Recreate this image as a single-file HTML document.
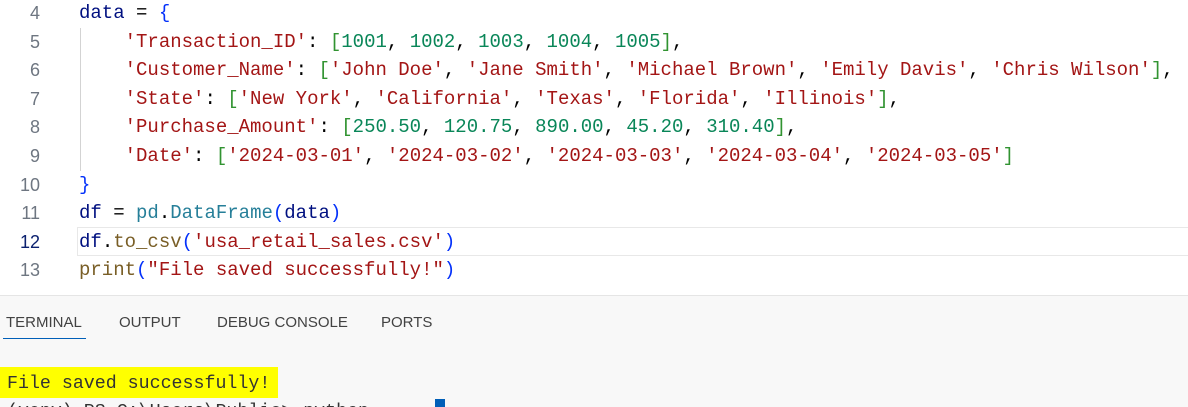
<!DOCTYPE html>
<html style="width:1188px;height:407px;overflow:hidden"><head><style>
body{margin:0;width:1188px;height:407px;overflow:hidden;background:#fff;position:relative;font-family:"Liberation Mono",monospace;}
.code{position:absolute;top:-1px;left:0;width:1188px;}
.l{height:28.6px;line-height:28.6px;font-size:19px;white-space:pre;position:relative;}
.n{position:absolute;left:0;width:40px;text-align:right;color:#6e7681;font-family:"Liberation Sans",sans-serif;font-size:18px;}
.t{position:absolute;left:79px;color:#001080;}
.s{color:#a31515}.num{color:#098658}.b1{color:#0431fa}.b2{color:#319331}.c{color:#267f99}.f{color:#795e26}.k{color:#000}
.cur{position:absolute;left:77px;right:-2px;top:227px;height:27px;border:1px solid #e8e8e8;}
.guide{position:absolute;left:80px;top:28px;height:143px;border-left:1px solid #d3d3d3;}
.panel{position:absolute;left:0;top:295px;width:1188px;height:112px;background:#f8f8f8;border-top:1px solid #e5e5e5;overflow:hidden;box-sizing:border-box;}
.tab{position:absolute;top:18px;font-family:"Liberation Sans",sans-serif;font-size:15px;color:#424242;}
.ul{position:absolute;left:3px;top:42px;width:83px;height:1px;background:#005fb8;}
.hl{position:absolute;left:0;top:71px;width:278px;height:31px;background:#ffff00;}
.term{position:absolute;left:7px;font-size:18.3px;white-space:pre;color:#333;}
.cursor{position:absolute;left:435px;top:103px;width:10px;height:12px;background:#005fb8;}
</style></head><body>
<div class="guide"></div>
<div class="cur"></div>
<div class="code">
<div class="l"><span class="n">4</span><span class="t">data <span class="k">=</span> <span class="b1">{</span></span></div>
<div class="l"><span class="n">5</span><span class="t">    <span class="s">'Transaction_ID'</span><span class="k">:</span> <span class="b2">[</span><span class="num">1001</span><span class="k">,</span> <span class="num">1002</span><span class="k">,</span> <span class="num">1003</span><span class="k">,</span> <span class="num">1004</span><span class="k">,</span> <span class="num">1005</span><span class="b2">]</span><span class="k">,</span></span></div>
<div class="l"><span class="n">6</span><span class="t">    <span class="s">'Customer_Name'</span><span class="k">:</span> <span class="b2">[</span><span class="s">'John Doe'</span><span class="k">,</span> <span class="s">'Jane Smith'</span><span class="k">,</span> <span class="s">'Michael Brown'</span><span class="k">,</span> <span class="s">'Emily Davis'</span><span class="k">,</span> <span class="s">'Chris Wilson'</span><span class="b2">]</span><span class="k">,</span></span></div>
<div class="l"><span class="n">7</span><span class="t">    <span class="s">'State'</span><span class="k">:</span> <span class="b2">[</span><span class="s">'New York'</span><span class="k">,</span> <span class="s">'California'</span><span class="k">,</span> <span class="s">'Texas'</span><span class="k">,</span> <span class="s">'Florida'</span><span class="k">,</span> <span class="s">'Illinois'</span><span class="b2">]</span><span class="k">,</span></span></div>
<div class="l"><span class="n">8</span><span class="t">    <span class="s">'Purchase_Amount'</span><span class="k">:</span> <span class="b2">[</span><span class="num">250.50</span><span class="k">,</span> <span class="num">120.75</span><span class="k">,</span> <span class="num">890.00</span><span class="k">,</span> <span class="num">45.20</span><span class="k">,</span> <span class="num">310.40</span><span class="b2">]</span><span class="k">,</span></span></div>
<div class="l"><span class="n">9</span><span class="t">    <span class="s">'Date'</span><span class="k">:</span> <span class="b2">[</span><span class="s">'2024-03-01'</span><span class="k">,</span> <span class="s">'2024-03-02'</span><span class="k">,</span> <span class="s">'2024-03-03'</span><span class="k">,</span> <span class="s">'2024-03-04'</span><span class="k">,</span> <span class="s">'2024-03-05'</span><span class="b2">]</span></span></div>
<div class="l"><span class="n">10</span><span class="t"><span class="b1">}</span></span></div>
<div class="l"><span class="n">11</span><span class="t">df <span class="k">=</span> <span class="c">pd</span><span class="k">.</span><span class="c">DataFrame</span><span class="b1">(</span>data<span class="b1">)</span></span></div>
<div class="l"><span class="n" style="color:#0b216f">12</span><span class="t">df<span class="k">.</span><span class="f">to_csv</span><span class="b1">(</span><span class="s">'usa_retail_sales.csv'</span><span class="b1">)</span></span></div>
<div class="l"><span class="n">13</span><span class="t"><span class="f">print</span><span class="b1">(</span><span class="s">"File saved successfully!"</span><span class="b1">)</span></span></div>
</div>
<div class="panel">
<span class="tab" style="left:6px">TERMINAL</span>
<span class="tab" style="left:119px">OUTPUT</span>
<span class="tab" style="left:217px">DEBUG CONSOLE</span>
<span class="tab" style="left:381px">PORTS</span>
<div class="ul"></div>
<div class="hl"></div>
<div class="term" style="top:78px">File saved successfully!</div>
<div class="term" style="top:106px">(venv) PS C:\Users\Public&gt; python</div>
<div class="cursor"></div>
</div>
</body></html>
